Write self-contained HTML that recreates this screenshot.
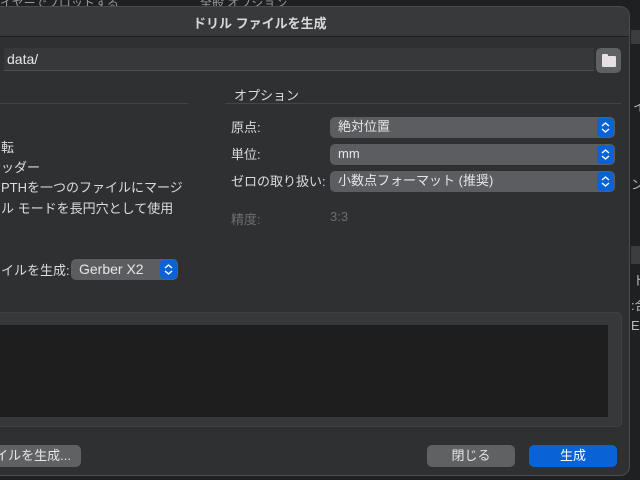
<!DOCTYPE html>
<html><head><meta charset="utf-8"><style>
*{margin:0;padding:0;box-sizing:border-box}
body{width:640px;height:480px;overflow:hidden;background:#1f2021;position:relative;font-family:"Liberation Sans","Noto Sans CJK JP",sans-serif;font-size:13px;color:#dcdcdc}
.a{position:absolute;white-space:nowrap}
#dlg{position:absolute;left:-20px;top:6px;width:650px;height:470px;background:#2e3032;border:1px solid #4a4c4e;border-radius:10px;overflow:hidden}
.sel{position:absolute;height:21px;background:#5b5d60;border-radius:5px;color:#e6e6e6;padding-left:8px;line-height:20px;font-size:13px}
.st{position:absolute;right:1px;top:1px;width:17px;height:19px;background:#0a63d6;border-radius:4px}
.st svg{position:absolute;left:3px;top:3px}
.btn{position:absolute;height:22px;border-radius:5px;background:#5f6163;color:#e6e6e6;text-align:center;line-height:21px;font-size:13px}
</style></head><body>
<div class="a" style="left:0;top:-6px;color:#9a9a9a;font-size:12px">イヤーでプロットする</div>
<div class="a" style="left:200px;top:-6px;color:#9a9a9a;font-size:12px">全般 オプション</div>
<div class="a" style="left:631px;top:30px;width:9px;height:14px;background:#3a3c3e"></div>
<div class="a" style="left:631px;top:246px;width:9px;height:18px;background:#3a3c3e"></div>
<div class="a" style="left:633px;top:96px;color:#bbb">イ</div>
<div class="a" style="left:631px;top:174px;color:#bbb">ン</div>
<div class="a" style="left:633px;top:270px;color:#bbb">ト</div>
<div class="a" style="left:631px;top:295px;color:#bbb">:合</div>
<div class="a" style="left:631px;top:318px;color:#bbb">E5</div>
<div id="dlg">
 <div class="a" style="left:0;top:0;width:650px;height:30px;background:#38393b;border-bottom:1px solid #1c1d1e"></div>
 <div class="a" style="left:212px;top:6px;color:#d8d8d8;font-size:13px;font-weight:bold">ドリル ファイルを生成</div>
 <div class="a" style="left:23px;top:41px;width:590px;height:23px;background:#36383a;border-bottom:1px solid #505254"></div>
 <div class="a" style="left:26px;top:44px;font-size:14px;color:#e8e8e8">data/</div>
 <div class="a" style="left:615px;top:41px;width:25px;height:25px;background:#5f6163;border-radius:5px"></div>
 <div class="a" style="left:621px;top:49px;width:14px;height:11px;background:#e6dfe6;border-radius:1px"></div>
 <div class="a" style="left:621px;top:47px;width:6px;height:3px;background:#e6dfe6;border-radius:1px 1px 0 0"></div>
 <div class="a" style="left:0;top:96px;width:207px;height:1px;background:#434547"></div>
 <div class="a" style="left:244px;top:96px;width:396px;height:1px;background:#434547"></div>
 <div class="a" style="left:253px;top:78px;font-size:13px">オプション</div>
 <div class="a" style="left:20px;top:130px">転</div>
 <div class="a" style="left:20px;top:150px">ッダー</div>
 <div class="a" style="left:20px;top:170px">PTHを一つのファイルにマージ</div>
 <div class="a" style="left:20px;top:191px">ル モードを長円穴として使用</div>
 <div class="a" style="left:250px;top:110px">原点:</div>
 <div class="a" style="left:250px;top:137px">単位:</div>
 <div class="a" style="left:250px;top:164px">ゼロの取り扱い:</div>
 <div class="a" style="left:250px;top:202px;color:#6c6e70">精度:</div>
 <div class="a" style="left:349px;top:202px;color:#6c6e70">3:3</div>
 <div class="sel" style="left:349px;top:110px;width:285px">絶対位置<div class="st"><svg width="11" height="13"><path d="M2 5L5.5 2L9 5M2 8L5.5 11L9 8" stroke="#fff" stroke-width="1.4" fill="none"/></svg></div></div>
 <div class="sel" style="left:349px;top:137px;width:285px">mm<div class="st"><svg width="11" height="13"><path d="M2 5L5.5 2L9 5M2 8L5.5 11L9 8" stroke="#fff" stroke-width="1.4" fill="none"/></svg></div></div>
 <div class="sel" style="left:349px;top:164px;width:285px">小数点フォーマット (推奨)<div class="st"><svg width="11" height="13"><path d="M2 5L5.5 2L9 5M2 8L5.5 11L9 8" stroke="#fff" stroke-width="1.4" fill="none"/></svg></div></div>
 <div class="a" style="left:20px;top:253px">イルを生成:</div>
 <div class="sel" style="left:90px;top:252px;width:107px;font-size:14px">Gerber X2<div class="st"><svg width="11" height="13"><path d="M2 5L5.5 2L9 5M2 8L5.5 11L9 8" stroke="#fff" stroke-width="1.4" fill="none"/></svg></div></div>
 <div class="a" style="left:0;top:305px;width:641px;height:115px;background:#363839;border:1px solid #3e4042;border-radius:5px"></div>
 <div class="a" style="left:0;top:318px;width:627px;height:92px;background:#1e1e1e"></div>
 <div class="btn" style="left:0;top:438px;width:100px;text-align:right;padding-right:10px">イルを生成...</div>
 <div class="btn" style="left:446px;top:438px;width:88px">閉じる</div>
 <div class="btn" style="left:548px;top:438px;width:88px;background:#0a63d6;color:#fff">生成</div>
</div>
</body></html>
